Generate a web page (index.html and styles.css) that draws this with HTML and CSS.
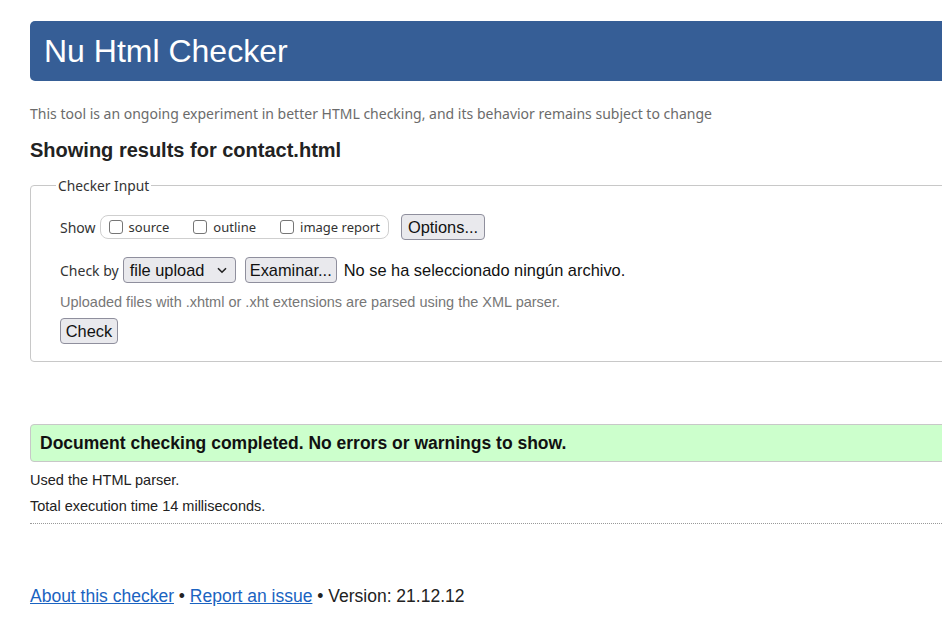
FILE: index.html
```html
<!DOCTYPE html>
<html lang="en">
<head>
<meta charset="utf-8">
<title>Showing results for contact.html - Nu Html Checker</title>
<link rel="stylesheet" href="styles.css">
</head>
<body>
<div class="page">
  <h1 class="banner">Nu Html Checker</h1>
  <p class="tagline">This tool is an ongoing experiment in better HTML checking, and its behavior remains subject to change</p>
  <h2 class="results-title">Showing results for contact.html</h2>

  <fieldset class="input-box">
    <legend class="legend">Checker Input</legend>
    <div class="row">
      <span class="ui-label">Show</span>
      <span class="show-group">
        <label class="opt"><span class="cb"></span>source</label>
        <label class="opt"><span class="cb"></span>outline</label>
        <label class="opt"><span class="cb"></span>image report</label>
      </span>
      <button class="btn btn-options">Options...</button>
    </div>
    <div class="row row-check">
      <span class="ui-label">Check by</span>
      <span class="select">file upload
        <svg class="chev" width="10" height="7" viewBox="0 0 10 7"><path d="M1 1.2 L5 5.2 L9 1.2" fill="none" stroke="#222" stroke-width="1.6"/></svg>
      </span>
      <button class="btn btn-browse">Examinar...</button>
      <span class="filename">No se ha seleccionado ningún archivo.</span>
    </div>
    <p class="hint">Uploaded files with .xhtml or .xht extensions are parsed using the XML parser.</p>
    <button class="btn btn-check">Check</button>
  </fieldset>

  <div class="success">Document checking completed. No errors or warnings to show.</div>
  <p class="meta meta-first">Used the HTML parser.</p>
  <p class="meta">Total execution time 14 milliseconds.</p>
  <hr class="dotted">

  <p class="footer"><a href="#">About this checker</a> • <a href="#">Report an issue</a> • Version: 21.12.12</p>
</div>
</body>
</html>
```

FILE: styles.css
```css
html, body {
  margin: 0;
  padding: 0;
  overflow: hidden;
  background: #fff;
}
body {
  font-family: "Liberation Sans", Arial, sans-serif;
  color: #222;
}
.page {
  margin-left: 30px;
  width: 1000px;
  padding-top: 21px;
}
.banner {
  margin: 0;
  height: 60px;
  line-height: 60px;
  background: #365e96;
  color: #fff;
  font-weight: normal;
  font-size: 32px;
  padding-left: 14px;
  border-radius: 5px;
}
.tagline {
  margin: 23px 0 0 0;
  font-family: "Noto Sans", "Open Sans", sans-serif;
  font-size: 14px;
  line-height: 20px;
  color: #6b6b6b;
}
.results-title {
  margin: 14px 0 0 0;
  font-size: 20px;
  line-height: 24px;
  font-weight: bold;
  color: #222;
}
.input-box {
  margin: 14px 0 0 0;
  padding: 18px 29px 17px 29px;
  border: 1px solid #c8c8c8;
  border-radius: 4px;
}
.legend {
  margin-left: -4px;
  padding: 0 2px;
  font-family: "Noto Sans", "Open Sans", sans-serif;
  font-size: 13.8px;
  color: #333;
}
.row {
  display: flex;
  align-items: center;
  height: 28px;
}
.row-check {
  margin-top: 15px;
}
.ui-label {
  font-family: "Noto Sans", "Open Sans", sans-serif;
  font-size: 14px;
  color: #333;
  margin-right: 4px;
}
.show-group {
  display: inline-flex;
  align-items: center;
  height: 22px;
  border: 1px solid #cfcfcf;
  border-radius: 8px;
  padding: 0 8px 0 8px;
  gap: 24px;
  margin-right: 12px;
}
.opt {
  display: inline-flex;
  align-items: center;
  font-family: "Noto Sans", "Open Sans", sans-serif;
  font-size: 13px;
  color: #333;
}
.cb {
  width: 12px;
  height: 12px;
  border: 1.5px solid #767676;
  border-radius: 3px;
  margin-right: 6px;
  background: #fff;
}
.btn {
  font-family: "Liberation Sans", Arial, sans-serif;
  font-size: 16.4px;
  color: #111;
  background: #e9e9ed;
  border: 1px solid #8f8f9d;
  border-radius: 4px;
  height: 26px;
  padding: 0 6px;
  margin: 0;
}
.select {
  display: inline-flex;
  align-items: center;
  box-sizing: border-box;
  height: 26px;
  width: 113px;
  padding: 0 6px;
  font-size: 16.4px;
  color: #111;
  background: #e9e9ed;
  border: 1px solid #8f8f9d;
  border-radius: 4px;
  justify-content: space-between;
  margin-right: 9px;
}
.chev {
  margin-right: 2px;
}
.btn-browse {
  padding: 0 4px;
  margin-right: 7px;
}
.filename {
  font-size: 16.4px;
  color: #111;
}
.hint {
  margin: 9px 0 7px 0;
  font-size: 14.5px;
  line-height: 18px;
  color: #777;
}
.btn-check {
  width: 58px;
  padding: 0;
}
.success {
  margin-top: 62px;
  box-sizing: border-box;
  height: 38px;
  line-height: 36px;
  padding-left: 9px;
  background: #ccffcc;
  border: 1px solid #c8c8c8;
  border-radius: 4px;
  font-weight: bold;
  font-size: 17.5px;
  color: #111;
}
.meta {
  margin: 0;
  font-size: 14.5px;
  line-height: 26px;
  color: #222;
}
.meta-first {
  margin-top: 5px;
}
.dotted {
  margin: 4px 0 0 0;
  border: 0;
  border-top: 1px dotted #999;
  height: 0;
}
.footer {
  margin: 61px 0 0 0;
  font-size: 17.5px;
  line-height: 22px;
  color: #222;
}
.footer a {
  color: #1a63c1;
  text-decoration: underline;
}
```
